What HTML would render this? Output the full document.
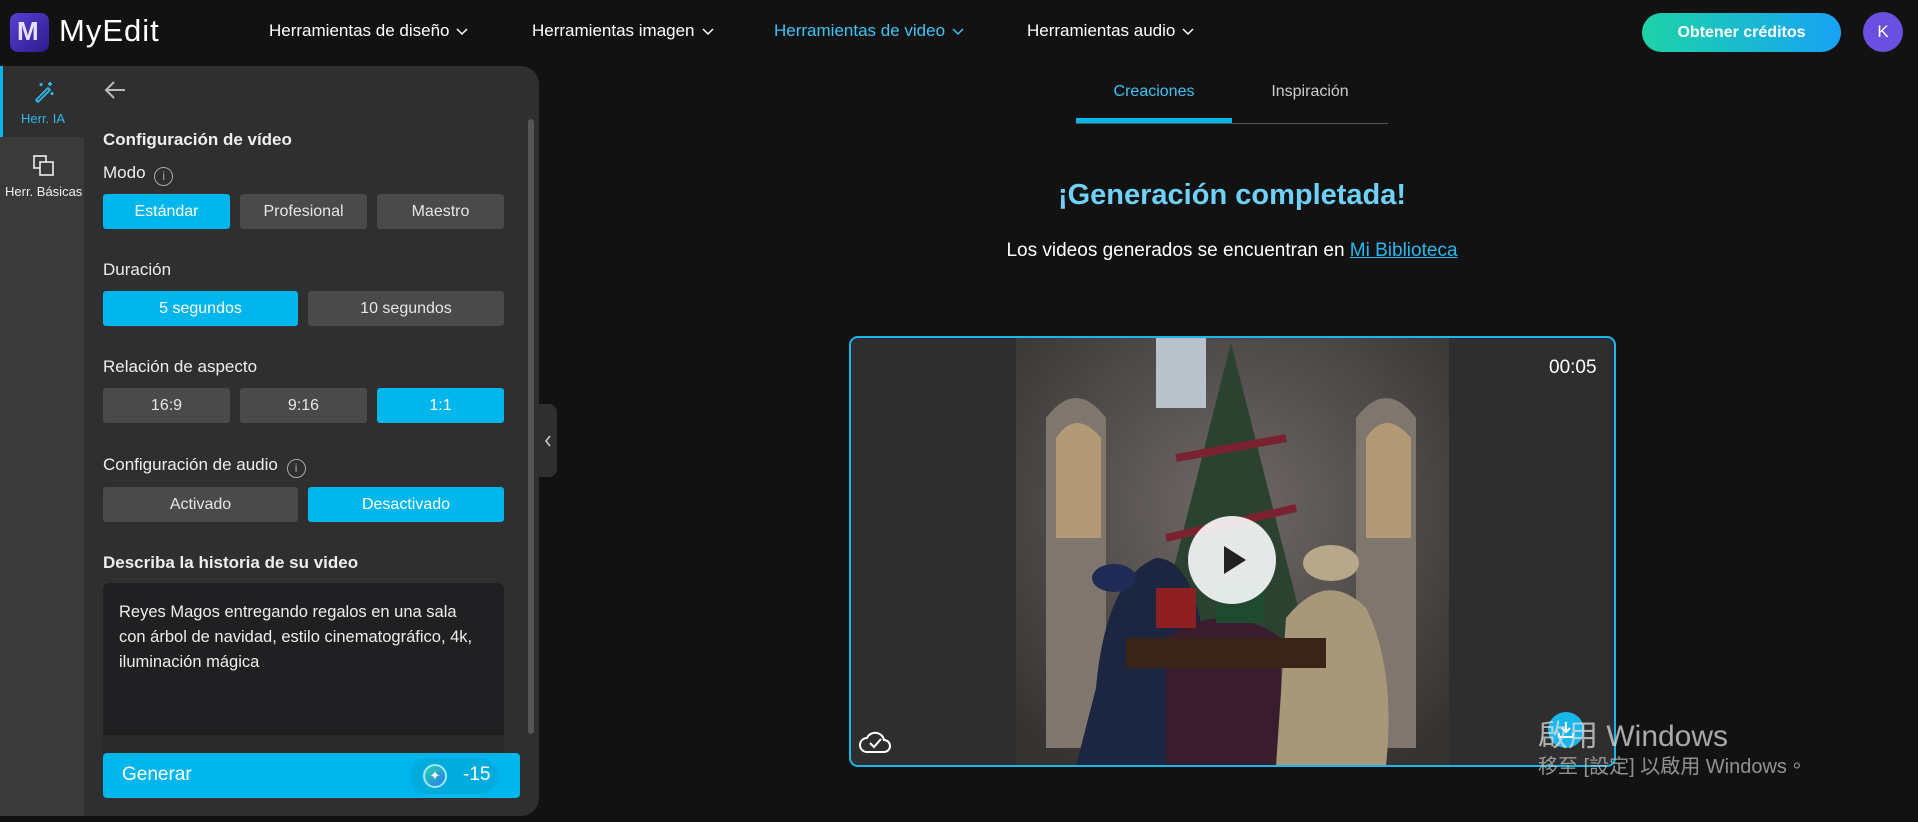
<!DOCTYPE html>
<html><head><meta charset="utf-8"><style>
*{margin:0;padding:0;box-sizing:border-box}
body{width:1918px;height:822px;background:#121212;font-family:"Liberation Sans","Noto Sans CJK TC",sans-serif;color:#fff;position:relative;overflow:hidden}
.a{position:absolute}
.nav{top:21px;font-size:17px;color:#fff;white-space:nowrap}
.nav svg{margin-left:7px;vertical-align:middle}
.btn{position:absolute;height:35px;border-radius:3px;background:#4a4a4a;color:#e6e6e6;font-size:16px;display:flex;align-items:center;justify-content:center}
.on{background:#00b6ec;color:#fff}
.lbl{position:absolute;left:103px;font-size:17px;color:#eee}
</style></head><body>
<div class="a" style="left:10px;top:13px;width:39px;height:39px;border-radius:8px;background:linear-gradient(135deg,#5b3fd6,#2a1c8a)"></div>
<div class="a" style="left:17px;top:16px;font-size:26px;font-weight:bold;color:#e8e0ff">M</div>
<div class="a" style="left:59px;top:13px;font-size:31px;color:#fff;letter-spacing:1px">MyEdit</div>
<div class="a nav" style="left:269px">Herramientas de diseño<svg width="12" height="8"><path d="M1 1l5 5 5-5" stroke="#fff" stroke-width="1.5" fill="none"/></svg></div>
<div class="a nav" style="left:532px">Herramientas imagen<svg width="12" height="8"><path d="M1 1l5 5 5-5" stroke="#fff" stroke-width="1.5" fill="none"/></svg></div>
<div class="a nav" style="left:774px;color:#3ec3f5">Herramientas de video<svg width="12" height="8"><path d="M1 1l5 5 5-5" stroke="#3ec3f5" stroke-width="1.5" fill="none"/></svg></div>
<div class="a nav" style="left:1027px">Herramientas audio<svg width="12" height="8"><path d="M1 1l5 5 5-5" stroke="#fff" stroke-width="1.5" fill="none"/></svg></div>
<div class="a" style="left:1642px;top:13px;width:199px;height:39px;border-radius:20px;background:linear-gradient(90deg,#1dd3a7,#17a2f5);font-size:16px;font-weight:bold;display:flex;align-items:center;justify-content:center">Obtener créditos</div>
<div class="a" style="left:1863px;top:12px;width:40px;height:40px;border-radius:50%;background:#6b4fe0;font-size:17px;display:flex;align-items:center;justify-content:center">K</div>
<div class="a" style="left:0;top:66px;width:539px;height:750px;background:#2f2f2f;border-radius:0 18px 18px 0"></div>
<div class="a" style="left:0;top:137px;width:84px;height:679px;background:#3a3a3a"></div>
<div class="a" style="left:0;top:66px;width:3px;height:71px;background:#00b6ec"></div>
<svg class="a" style="left:32px;top:80px" width="24" height="24" viewBox="0 0 24 24" fill="none" stroke="#2fb8f0" stroke-width="1.8"><path d="M4 20L16 8l2 2L6 22z"/><path d="M18 2v4M16 4h4M9 3v3M7.5 4.5h3M20 12v3M18.5 13.5h3"/></svg>
<div class="a" style="left:21px;top:111px;font-size:13px;color:#2fb8f0">Herr. IA</div>
<svg class="a" style="left:32px;top:154px" width="24" height="24" viewBox="0 0 24 24" fill="none" stroke="#eee" stroke-width="1.6"><rect x="2" y="2" width="12" height="12"/><rect x="8" y="8" width="13" height="13" fill="#3a3a3a"/></svg>
<div class="a" style="left:5px;top:184px;font-size:13px;color:#eee">Herr. Básicas</div>
<svg class="a" style="left:104px;top:80px" width="22" height="20" viewBox="0 0 22 20" fill="none" stroke="#bbb" stroke-width="2"><path d="M21 10H2M10 2L2 10l8 8"/></svg>
<div class="lbl" style="top:130px;font-weight:bold">Configuración de vídeo</div>
<div class="lbl" style="top:163px">Modo <span style="display:inline-block;width:19px;height:19px;border:1.5px solid #aaa;border-radius:50%;font-size:12px;text-align:center;line-height:16px;color:#aaa;vertical-align:-2px;margin-left:4px">i</span></div>
<div class="btn on" style="left:103px;top:194px;width:127px">Estándar</div>
<div class="btn" style="left:240px;top:194px;width:127px">Profesional</div>
<div class="btn" style="left:377px;top:194px;width:127px">Maestro</div>
<div class="lbl" style="top:260px">Duración</div>
<div class="btn on" style="left:103px;top:291px;width:195px">5 segundos</div>
<div class="btn" style="left:308px;top:291px;width:196px">10 segundos</div>
<div class="lbl" style="top:357px">Relación de aspecto</div>
<div class="btn" style="left:103px;top:388px;width:127px">16:9</div>
<div class="btn" style="left:240px;top:388px;width:127px">9:16</div>
<div class="btn on" style="left:377px;top:388px;width:127px">1:1</div>
<div class="lbl" style="top:455px">Configuración de audio <span style="display:inline-block;width:19px;height:19px;border:1.5px solid #aaa;border-radius:50%;font-size:12px;text-align:center;line-height:16px;color:#aaa;vertical-align:-2px;margin-left:4px">i</span></div>
<div class="btn" style="left:103px;top:487px;width:195px">Activado</div>
<div class="btn on" style="left:308px;top:487px;width:196px">Desactivado</div>
<div class="lbl" style="top:553px;font-weight:bold">Describa la historia de su video</div>
<div class="a" style="left:103px;top:583px;width:401px;height:152px;background:#202022;border-radius:6px 6px 0 0"></div>
<div class="a" style="left:119px;top:600px;width:358px;font-size:16.5px;line-height:25px;color:#eee">Reyes Magos entregando regalos en una sala con árbol de navidad, estilo cinematográfico, 4k, iluminación mágica</div>
<div class="a" style="left:103px;top:735px;width:401px;height:18px;background:#2a2a2a"></div>
<div class="a" style="left:528px;top:119px;width:6px;height:615px;border-radius:3px;background:#555"></div>
<div class="a" style="left:103px;top:753px;width:417px;height:45px;border-radius:4px;background:#00b6ec"></div>
<div class="a" style="left:122px;top:764px;font-size:19px">Generar</div>
<div class="a" style="left:410px;top:758px;width:88px;height:36px;border-radius:18px;background:rgba(0,0,0,0.06)"></div>
<div class="a" style="left:423px;top:764px;width:24px;height:24px;border-radius:50%;background:linear-gradient(135deg,#26d3a5,#2a7cf0);border:2px solid #9fe9ff;color:#fff;font-size:13px;text-align:center;line-height:20px">✦</div>
<div class="a" style="left:463px;top:764px;font-size:19px">-15</div>
<div class="a" style="left:539px;top:404px;width:18px;height:73px;background:#2f2f2f;border-radius:0 8px 8px 0"></div>
<svg class="a" style="left:543px;top:434px" width="10" height="14"><path d="M7 2L3 7l4 5" stroke="#ccc" stroke-width="1.6" fill="none"/></svg>
<div class="a" style="left:1076px;top:83px;width:156px;text-align:center;font-size:16px;color:#3ec3f5">Creaciones</div>
<div class="a" style="left:1232px;top:83px;width:156px;text-align:center;font-size:16px;color:#ccc">Inspiración</div>
<div class="a" style="left:1076px;top:123px;width:312px;height:1px;background:#555"></div>
<div class="a" style="left:1076px;top:118px;width:156px;height:5px;background:#00b6ec"></div>
<div class="a" style="left:882px;top:179px;width:700px;text-align:center;font-size:29px;font-weight:bold;color:#6fd1f7">¡Generación completada!</div>
<div class="a" style="left:832px;top:240px;width:800px;text-align:center;font-size:19px;color:#fff">Los videos generados se encuentran en <span style="color:#27b8f0;text-decoration:underline">Mi Biblioteca</span></div>
<div class="a" style="left:849px;top:336px;width:767px;height:431px;border:2px solid #1ab7ec;border-radius:9px;background:#2e2e2e;overflow:hidden">
<svg class="a" style="left:165px;top:0" width="433" height="428" viewBox="0 0 433 428">
<defs><radialGradient id="g" cx="0.5" cy="0.4" r="0.7"><stop offset="0" stop-color="#6f6966"/><stop offset="1" stop-color="#363332"/></radialGradient></defs>
<rect width="433" height="428" fill="url(#g)"/>
<rect x="140" y="0" width="50" height="70" fill="#b9c2c9"/>
<path d="M30 80 q30-40 60 0 v330 h-60z" fill="#7f766e"/><path d="M340 80 q30-40 60 0 v330 h-60z" fill="#7f766e"/>
<path d="M40 100 q20-30 45 0 v100 h-45z" fill="#c9a97a" opacity=".7"/><path d="M350 100 q20-30 45 0 v100 h-45z" fill="#c9a97a" opacity=".7"/>
<path d="M215 5 L290 300 L140 300z" fill="#2c4230"/>
<path d="M160 120 L270 100 M150 200 L280 170" stroke="#7a2230" stroke-width="8"/>
<path d="M80 350 q10-110 60-130 q40 0 50 100 L200 428 H60z" fill="#1c2640"/>
<path d="M150 300 q60-40 115 0 v128 h-115z" fill="#3a1d2d"/>
<path d="M270 280 q40-50 80-10 q30 60 20 158 H260z" fill="#a8987a"/>
<ellipse cx="315" cy="225" rx="28" ry="18" fill="#b8a88a"/>
<ellipse cx="98" cy="240" rx="22" ry="14" fill="#1f2a55"/>
<rect x="140" y="250" width="40" height="40" fill="#8e1f22"/><rect x="200" y="240" width="48" height="45" fill="#1f4a30"/>
<rect x="110" y="300" width="200" height="30" fill="#3a2418"/>
<circle cx="216" cy="222" r="44" fill="rgba(255,255,255,0.88)"/>
<path d="M208 208 L230 222 L208 236z" fill="#222"/>
</svg>
<div class="a" style="left:698px;top:19px;font-size:19px;color:#fff">00:05</div>
<svg class="a" style="left:8px;top:389px" width="32" height="28" viewBox="0 0 32 28" fill="none" stroke="#fff" stroke-width="2"><path d="M8 25h17a6 6 0 0 0 0-12 9 9 0 0 0-17-2 7 7 0 0 0 0 14z"/><path d="M11 16l4 4 7-8"/></svg>
<div class="a" style="left:697px;top:374px;width:36px;height:36px;border-radius:50%;background:#1ab7ec"></div>
<svg class="a" style="left:705px;top:382px" width="20" height="20" viewBox="0 0 20 20" fill="none" stroke="#fff" stroke-width="2"><path d="M10 2v10M6 8l4 4 4-4M3 13v4h14v-4"/></svg>
</div>
<div class="a" style="left:1538px;top:711px;font-size:30px;color:rgba(220,220,220,0.75)">啟用 Windows</div>
<div class="a" style="left:1538px;top:750px;font-size:20px;color:rgba(200,200,200,0.7)">移至 [設定] 以啟用 Windows。</div>
</body></html>
